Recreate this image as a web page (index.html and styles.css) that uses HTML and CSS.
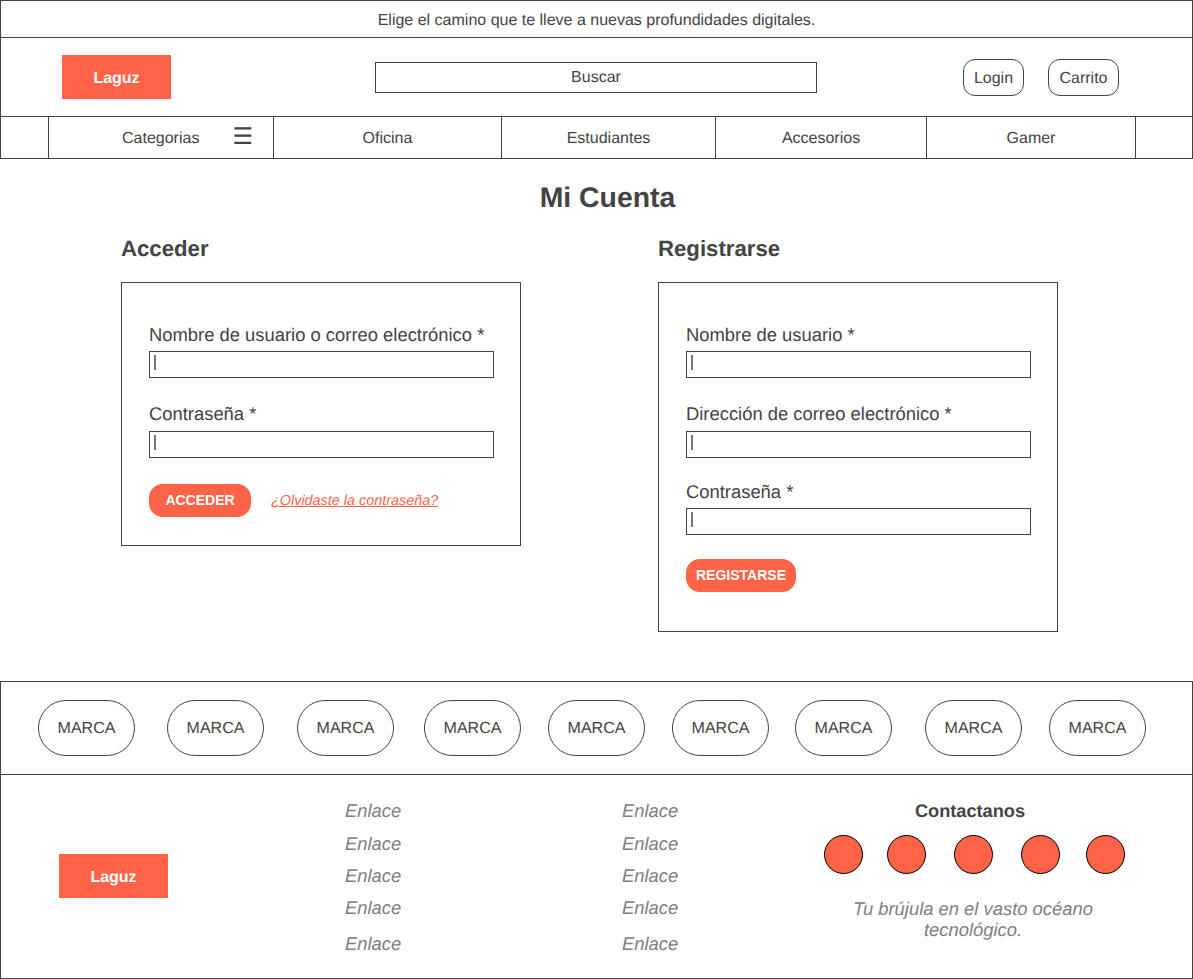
FILE: index.html
```html
<!DOCTYPE html>
<html lang="es">
<head>
  <meta charset="UTF-8" />
  <meta name="viewport" content="width=device-width, initial-scale=1.0" />
  <title>Laguz - Mi Cuenta</title>
  <link rel="stylesheet" href="styles.css">
</head>
<body>
  <div class="topbar">Elige el camino que te lleve a nuevas profundidades digitales.</div>

  <header class="header">
    <a class="logo header-logo">Laguz</a>
    <div class="search">Buscar</div>
    <div class="header-actions">
      <a class="action action-login">Login</a>
      <a class="action action-cart">Carrito</a>
    </div>
  </header>

  <nav class="nav">
    <div class="nav-cell"></div>
    <div class="nav-cell nav-categories"><span>Categorias</span><span class="burger">☰</span></div>
    <div class="nav-cell">Oficina</div>
    <div class="nav-cell">Estudiantes</div>
    <div class="nav-cell">Accesorios</div>
    <div class="nav-cell">Gamer</div>
    <div class="nav-cell"></div>
  </nav>

  <main class="account">
    <h1>Mi Cuenta</h1>
    <div class="columns">
      <section class="column">
        <h2>Acceder</h2>
        <form class="box box-login">
          <label>Nombre de usuario o correo electrónico *</label>
          <div class="field"></div>
          <label class="next">Contraseña *</label>
          <div class="field"></div>
          <div class="form-actions">
            <button type="button" class="btn btn-login">ACCEDER</button>
            <a class="forgot">¿Olvidaste la contraseña?</a>
          </div>
        </form>
      </section>
      <section class="column">
        <h2>Registrarse</h2>
        <form class="box box-register">
          <label>Nombre de usuario *</label>
          <div class="field"></div>
          <label class="next">Dirección de correo electrónico *</label>
          <div class="field"></div>
          <label class="next-short">Contraseña *</label>
          <div class="field"></div>
          <div class="form-actions form-actions-register">
            <button type="button" class="btn btn-register">REGISTARSE</button>
          </div>
        </form>
      </section>
    </div>
  </main>

  <section class="brands">
    <div class="brand">MARCA</div>
    <div class="brand">MARCA</div>
    <div class="brand">MARCA</div>
    <div class="brand">MARCA</div>
    <div class="brand">MARCA</div>
    <div class="brand">MARCA</div>
    <div class="brand">MARCA</div>
    <div class="brand">MARCA</div>
    <div class="brand">MARCA</div>
  </section>

  <footer class="footer">
    <a class="logo footer-logo">Laguz</a>
    <ul class="links links-first">
      <li>Enlace</li>
      <li>Enlace</li>
      <li>Enlace</li>
      <li>Enlace</li>
      <li>Enlace</li>
    </ul>
    <ul class="links links-second">
      <li>Enlace</li>
      <li>Enlace</li>
      <li>Enlace</li>
      <li>Enlace</li>
      <li>Enlace</li>
    </ul>
    <div class="contact">
      <h3>Contactanos</h3>
      <div class="socials">
        <span class="dot"></span>
        <span class="dot"></span>
        <span class="dot"></span>
        <span class="dot"></span>
        <span class="dot"></span>
      </div>
      <p>Tu brújula en el vasto océano tecnológico.</p>
    </div>
  </footer>
</body>
</html>
```

FILE: styles.css
```css
* {
  box-sizing: border-box;
}
body {
  margin: 0;
  width: 1193px;
  height: 979px;
  overflow: hidden;
  font-family: "Liberation Sans", Arial, sans-serif;
  font-size: 16px;
  color: #444;
  background-color: #fff;
  text-rendering: geometricPrecision;
}
.topbar {
  height: 38px;
  border: 1px solid #444;
  text-align: center;
  line-height: 40px;
}
.header {
  height: 79px;
  display: flex;
  align-items: flex-start;
  border-left: 1px solid #444;
  border-right: 1px solid #444;
  border-bottom: 1px solid #444;
}
.logo {
  display: block;
  width: 109px;
  height: 44px;
  line-height: 47px;
  text-align: center;
  background-color: #ff6347;
  color: #fff;
  font-weight: bold;
}
.header-logo {
  margin: 17px 0 0 61px;
}
.search {
  width: 442px;
  height: 31px;
  margin: 24px 0 0 204px;
  border: 1px solid #444;
  text-align: center;
  line-height: 29px;
}
.header-actions {
  display: flex;
  margin: 21px 0 0 146px;
  gap: 24px;
}
.action {
  height: 37px;
  border: 1px solid #444;
  border-radius: 12px;
  text-align: center;
  line-height: 37px;
}
.action-login {
  width: 61px;
}
.action-cart {
  width: 71px;
}
.nav {
  height: 42px;
  display: grid;
  grid-template-columns: 48px 225px 228px 214px 211px 209px 57px;
  border-left: 1px solid #444;
  border-right: 1px solid #444;
  border-bottom: 1px solid #444;
}
.nav-cell {
  height: 41px;
  border-right: 1px solid #444;
  text-align: center;
  line-height: 43px;
}
.nav-cell:last-child {
  border-right: none;
}
.nav-categories {
  display: flex;
  padding-left: 73px;
}
.burger {
  margin-left: 33px;
  font-size: 23px;
  line-height: 38px;
}
.account {
  height: 522px;
}
h1 {
  margin: 0;
  padding: 22px 0 0 22px;
  text-align: center;
  font-size: 28.4px;
  line-height: 34px;
}
.columns {
  display: flex;
  gap: 137px;
  padding: 20px 0 0 121px;
}
.column {
  width: 400px;
}
h2 {
  margin: 0 0 19px;
  font-size: 22.2px;
  line-height: 28px;
}
.box {
  border: 1px solid #444;
  padding: 40px 26px 0 27px;
}
.box-login {
  height: 264px;
}
.box-register {
  height: 350px;
}
label {
  display: block;
  padding-top: 1px;
  font-size: 18.4px;
  line-height: 22px;
  margin-bottom: 5px;
}
label.next {
  padding-top: 0;
  margin-top: 25px;
  margin-bottom: 6px;
}
label.next-short {
  margin-top: 22px;
}
.field {
  height: 27px;
  border: 1px solid #444;
}
/* fake caret, the inputs are drawn empty */
.field::before {
  content: "";
  display: block;
  width: 2px;
  height: 15px;
  margin: 3px 0 0 4px;
  background-color: #777;
}
.form-actions {
  display: flex;
  align-items: center;
  gap: 20px;
  margin-top: 26px;
}
.form-actions-register {
  margin-top: 24px;
}
.btn {
  height: 33px;
  border: none;
  border-radius: 14px;
  background-color: #ff6347;
  color: #fff;
  font-family: inherit;
  font-size: 14px;
  font-weight: bold;
  padding: 0 0 2px;
}
.btn-login {
  width: 102px;
}
.btn-register {
  width: 110px;
}
.forgot {
  color: #ff6347;
  font-size: 14.4px;
  font-style: italic;
  text-decoration: underline;
}
.brands {
  height: 94px;
  border: 1px solid #444;
  display: grid;
  grid-template-columns: 129px 130px 127px 124px 124px 123px 130px 124px 97px;
  padding: 18px 0 0 37px;
}
.brand {
  width: 97px;
  height: 56px;
  border: 1px solid #444;
  border-radius: 28px;
  text-align: center;
  line-height: 56px;
}
.footer {
  height: 204px;
  border-left: 1px solid #444;
  border-right: 1px solid #444;
  border-bottom: 1px solid #444;
  display: flex;
  align-items: flex-start;
}
.footer-logo {
  margin: 79px 0 0 58px;
}
.links {
  list-style: none;
  margin: 0;
  padding: 25px 0 0;
  width: 277px;
  font-size: 18.4px;
  font-style: italic;
  color: #808080;
}
.links-first {
  margin-left: 177px;
}
.links li {
  height: 32px;
  line-height: 22px;
}
.links li:first-child {
  height: 33px;
}
.links li:nth-child(4) {
  height: 36px;
}
.links-second {
  width: 170px;
}
.contact {
  width: 340px;
  padding-top: 25px;
  text-align: center;
}
h3 {
  margin: 0;
  padding-left: 16px;
  font-size: 18.2px;
  line-height: 22px;
}
.socials {
  display: flex;
  gap: 24px;
  margin-top: 13px;
  padding-left: 32px;
}
.dot {
  width: 39px;
  height: 39px;
  border: 1px solid #000;
  border-radius: 50%;
  background-color: #ff6347;
}
.dot:nth-child(3), .dot:nth-child(4) {
  margin-left: 4px;
}
.dot:nth-child(5) {
  margin-left: 2px;
}
.contact p {
  width: 280px;
  margin: 24px 0 0 41px;
  font-size: 18.4px;
  line-height: 21px;
  font-style: italic;
  color: #808080;
}
```
